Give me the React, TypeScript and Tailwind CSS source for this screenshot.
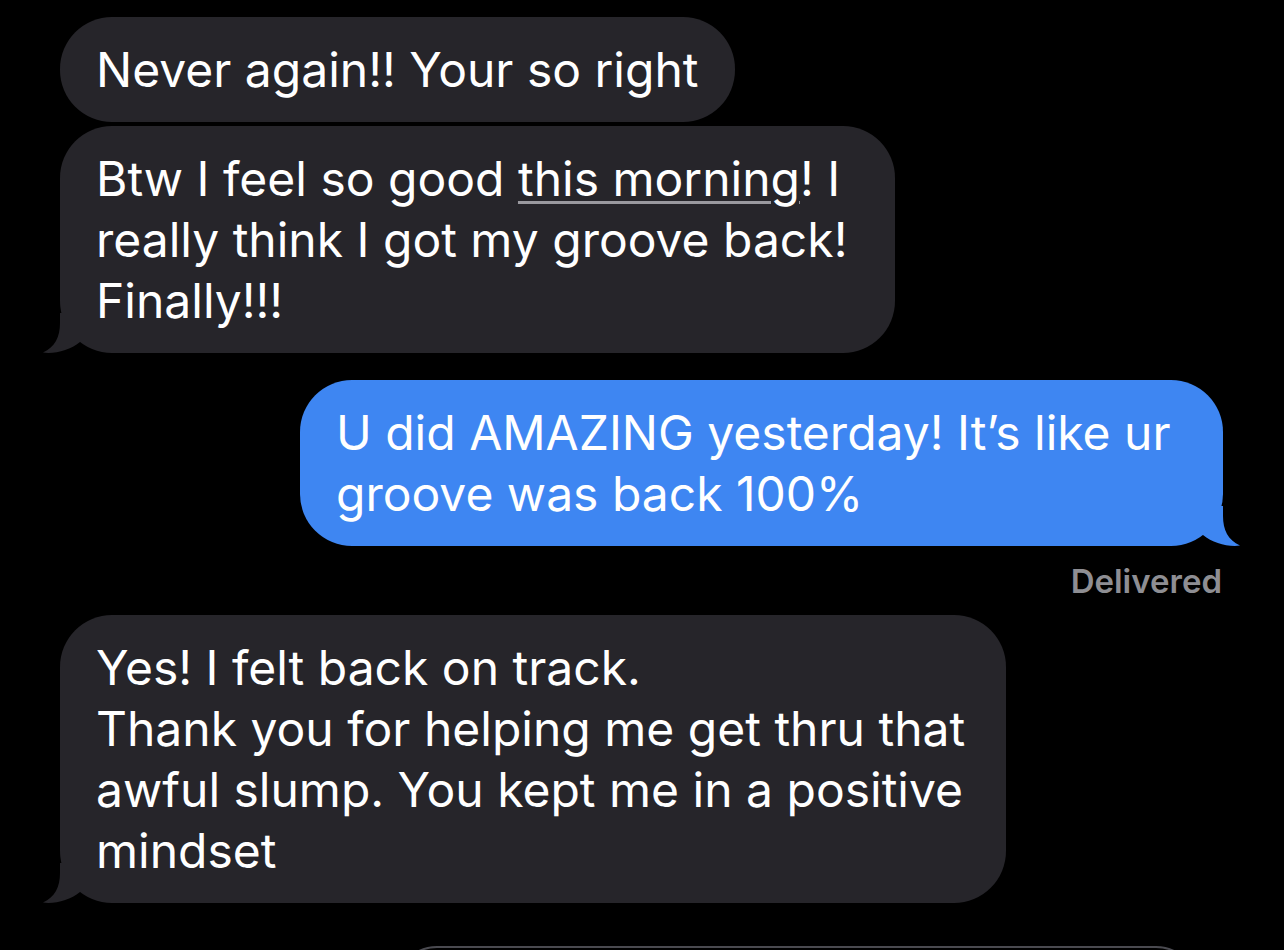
import type { ReactNode } from "react";

const FONT = { fontFamily: "Inter, 'Noto Sans', sans-serif" };

function Tail({ side, color }: { side: "left" | "right"; color: string }) {
  return (
    <svg
      width="40"
      height="40"
      viewBox="0 0 40 40"
      className={
        side === "left"
          ? "absolute bottom-0 left-[-20px]"
          : "absolute bottom-0 right-[-20px] -scale-x-100"
      }
    >
      <path d="M20 0 L20 10 C20 24 15 34 3 39.6 C16 41 30 37 40 29 L40 0 Z" fill={color} />
    </svg>
  );
}

function Bubble({
  children,
  width,
  tail,
  blue
}: {
  children: ReactNode;
  width: string;
  tail?: boolean;
  blue?: boolean;
}) {
  const color = blue ? "#3e86f2" : "#26252a";
  return (
    <div
      className={`relative rounded-[52px] py-[22px] pl-[36px] whitespace-nowrap text-[48px] leading-[61px] tracking-normal text-white ${width} ${
        blue ? "bg-[#3e86f2] self-end" : "bg-[#26252a] self-start"
      }`}
    >
      {children}
      {tail ? <Tail side={blue ? "right" : "left"} color={color} /> : null}
    </div>
  );
}

export default function App() {
  return (
    <div className="h-[950px] w-[1284px] overflow-hidden bg-black" style={FONT}>
      <div className="flex flex-col pt-[17px] pl-[60px] pr-[61px]">
        <Bubble width="w-[675px]">Never again!! Your so right</Bubble>
        <div className="mt-[4px] flex flex-col">
          <Bubble width="w-[835px]" tail>
            Btw I feel so good{" "}
            <span className="underline decoration-[#9a999f] decoration-[3px] underline-offset-[5px]">
              this morning
            </span>
            ! I<br />
            really think I got my groove back!
            <br />
            Finally!!!
          </Bubble>
        </div>
        <div className="mt-[27px] flex flex-col">
          <Bubble width="w-[923px]" tail blue>
            U did AMAZING yesterday! It’s like ur
            <br />
            groove was back 100%
          </Bubble>
        </div>
        <div className="mt-[17px] pr-px text-right text-[33px] leading-[36px] font-semibold text-[#8e8e93]">
          Delivered
        </div>
        <div className="mt-[16px] flex flex-col">
          <Bubble width="w-[946px]" tail>
            Yes! I felt back on track.
            <br />
            Thank you for helping me get thru that
            <br />
            awful slump. You kept me in a positive
            <br />
            mindset
          </Bubble>
        </div>
        <div className="mt-[43px] ml-[335px] mr-[25px] h-[90px] rounded-[42px] border-2 border-[#4a4a50]" />
      </div>
    </div>
  );
}
